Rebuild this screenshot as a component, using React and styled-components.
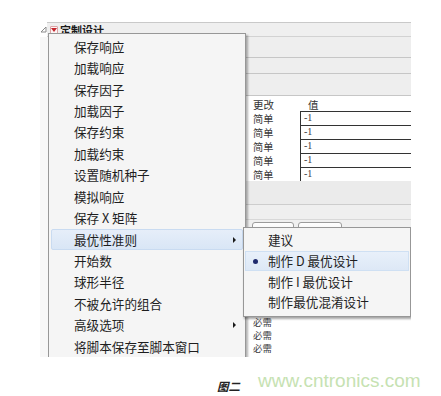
import React from 'react'
import styled, { createGlobalStyle } from 'styled-components'

const mainItems = [
  { label: '保存响应' },
  { label: '加载响应' },
  { label: '保存因子' },
  { label: '加载因子' },
  { label: '保存约束' },
  { label: '加载约束' },
  { label: '设置随机种子' },
  { label: '模拟响应' },
  { label: '保存 X 矩阵' },
  { label: '最优性准则', sub: true, active: true },
  { label: '开始数' },
  { label: '球形半径' },
  { label: '不被允许的组合' },
  { label: '高级选项', sub: true },
  { label: '将脚本保存至脚本窗口' },
]

const subItems = [
  { label: '建议' },
  { label: '制作 D 最优设计', checked: true, active: true },
  { label: '制作 I 最优设计' },
  { label: '制作最优混淆设计' },
]

const tableRows = ['-1', '-1', '-1', '-1', '-1']

// rows under the submenu are covered, only the last three show
const reqRows = ['', '', '', '', '', '必需', '必需', '必需']

export default function App() {
  return (
    <Page>
      <GlobalStyle />
      <Window>
        <TitleBar>
          <Disclosure width="7" height="7" viewBox="0 0 7 7">
            <path d="M6 1 L6 6 L1 6 Z" fill="none" stroke="#8a8a8a" strokeWidth="1" />
          </Disclosure>
          <TitleInner>
            <RedButton>
              <svg width="6" height="4" viewBox="0 0 6 4">
                <path d="M0 0 L6 0 L3 4 Z" fill="#c4262d" />
              </svg>
            </RedButton>
            <TitleText>定制设计</TitleText>
          </TitleInner>
        </TitleBar>

        <Body>
          <LeftPane />
          <RightPane>
            <Band h={21} />
            <Band h={16} />
            <Band h={22} />
            <TableHead>
              <HeadCell>更改</HeadCell>
              <HeadCell value>值</HeadCell>
            </TableHead>
            {tableRows.map((v, i) => (
              <TableRow key={i}>
                <Cell>简单</Cell>
                <ValueCell>{v}</ValueCell>
              </TableRow>
            ))}
            <GrayBlock h={24} />
            <GrayBlock h={15} light />
            <ButtonRow>
              <GhostButton w={42} />
              <GhostButton w={44} />
            </ButtonRow>
            {reqRows.map((t, i) => (
              <ReqRow key={i}>{t}</ReqRow>
            ))}
          </RightPane>
        </Body>

        <MainMenu>
          {mainItems.map((item) => (
            <MenuItem key={item.label} active={item.active}>
              {item.label}
              {item.sub && <SubArrow />}
            </MenuItem>
          ))}
        </MainMenu>

        <SubMenu>
          {subItems.map((item) => (
            <SubItem key={item.label} active={item.active}>
              {item.checked && <Bullet />}
              {item.label}
            </SubItem>
          ))}
        </SubMenu>
      </Window>

      <Footer>
        <Caption>图二</Caption>
        <Watermark>www.cntronics.com</Watermark>
      </Footer>
    </Page>
  )
}

const GlobalStyle = createGlobalStyle`
  html, body {
    margin: 0;
    padding: 0;
    background: #ffffff;
  }
  body {
    font-family: "Noto Sans CJK SC", "Liberation Sans", sans-serif;
    color: #1e1e1e;
  }
`

const Page = styled.div`
  width: 441px;
  height: 396px;
  padding-top: 22px;
  box-sizing: border-box;
  overflow: hidden;
`

const Window = styled.div`
  position: relative;
  margin-left: 40px;
  width: 371px;
  height: 335px;
  overflow: hidden;
  display: flex;
  flex-direction: column;
`

const TitleBar = styled.div`
  display: flex;
  height: 15px;
  flex-shrink: 0;
`

const Disclosure = styled.svg`
  margin-top: 4px;
  flex-shrink: 0;
`

const TitleInner = styled.div`
  flex: 1;
  display: flex;
  align-items: center;
  padding-left: 3px;
  border-top: 1px solid #c9c9c9;
  border-bottom: 1px solid #d2d2d2;
  background: #efefef;
`

const RedButton = styled.span`
  width: 8px;
  height: 8px;
  box-sizing: border-box;
  border: 1px solid #dca4a6;
  background: #fdf5f5;
  border-radius: 1px;
  display: flex;
  align-items: center;
  justify-content: center;
  margin-right: 2px;
`

const TitleText = styled.span`
  font-size: 11px;
  font-weight: 700;
  line-height: 12px;
  color: #1a1a1a;
`

const Body = styled.div`
  flex: 1;
  display: flex;
`

const LeftPane = styled.div`
  width: 206px;
  flex-shrink: 0;
  background: #f7f7f7;
`

const RightPane = styled.div`
  flex: 1;
  display: flex;
  flex-direction: column;
  background: #ffffff;
`

const Band = styled.div`
  height: ${(p) => p.h}px;
  box-sizing: border-box;
  flex-shrink: 0;
  background: #eeeeee;
  border-bottom: 1px solid #c6c6c6;
`

const TableHead = styled.div`
  display: grid;
  grid-template-columns: 54px 1fr;
  height: 15px;
  flex-shrink: 0;
  align-items: end;
`

const HeadCell = styled.span`
  font-size: 10.5px;
  line-height: 13px;
  color: #333;
  padding-left: ${(p) => (p.value ? 8 : 7)}px;
`

const TableRow = styled.div`
  display: grid;
  grid-template-columns: 54px 1fr;
  height: 14px;
  flex-shrink: 0;
`

const Cell = styled.span`
  font-size: 10.2px;
  line-height: 12px;
  padding-left: 7px;
  padding-top: 2px;
  color: #3a3a3a;
  overflow: hidden;
`

const ValueCell = styled.span`
  font-family: "Liberation Serif", "Noto Sans CJK SC", serif;
  font-size: 10px;
  line-height: 12px;
  padding-left: 3px;
  color: #3a3a3a;
  border-left: 1px solid #333;
  border-top: 1px solid #333;
  box-sizing: border-box;
`

const GrayBlock = styled.div`
  height: ${(p) => p.h}px;
  box-sizing: border-box;
  flex-shrink: 0;
  background: ${(p) => (p.light ? '#efefef' : '#ebebeb')};
  border-bottom: 1px solid ${(p) => (p.light ? '#d8d8d8' : '#cdcdcd')};
`

const ButtonRow = styled.div`
  display: flex;
  gap: 4px;
  height: 31px;
  padding: 2px 6px 0;
  box-sizing: border-box;
  flex-shrink: 0;
  background: #f0f0f0;
`

const GhostButton = styled.div`
  width: ${(p) => p.w}px;
  height: 22px;
  box-sizing: border-box;
  border: 1px solid #9c9c9c;
  border-radius: 3px;
  background: linear-gradient(#ffffff, #e8e8e8);
`

const ReqRow = styled.div`
  height: 13px;
  flex-shrink: 0;
  font-size: 9.4px;
  line-height: 13px;
  padding-left: 7px;
  color: #3a3a3a;
`

const MainMenu = styled.div`
  position: absolute;
  left: 8px;
  top: 11px;
  width: 198px;
  height: 340px;
  box-sizing: border-box;
  padding: 2px;
  background: #f5f5f5;
  border: 1px solid #979797;
  box-shadow: 2px 2px 2px rgba(0, 0, 0, 0.3);
`

const MenuItem = styled.div`
  position: relative;
  height: 21.43px;
  box-sizing: border-box;
  display: flex;
  align-items: center;
  padding-left: 22px;
  font-size: 12.6px;
  line-height: 16px;
  color: #1e1e1e;
  border: 1px solid ${(p) => (p.active ? '#c9dbf1' : 'transparent')};
  border-radius: 2px;
  background: ${(p) =>
    p.active ? 'linear-gradient(#e6eef9, #d9e6f6)' : 'transparent'};
`

const SubArrow = styled.span`
  position: absolute;
  right: 6px;
  top: 50%;
  margin-top: -3px;
  width: 0;
  height: 0;
  border-top: 3px solid transparent;
  border-bottom: 3px solid transparent;
  border-left: 3px solid #1a1a1a;
`

const SubMenu = styled.div`
  position: absolute;
  left: 203px;
  top: 205px;
  width: 168px;
  height: 90px;
  box-sizing: border-box;
  padding: 2px 1px;
  background: #f5f5f5;
  border: 1px solid #979797;
  box-shadow: 1px 2px 2px rgba(0, 0, 0, 0.35);
`

const SubItem = styled.div`
  position: relative;
  height: 20.7px;
  box-sizing: border-box;
  display: flex;
  align-items: center;
  padding-left: 22px;
  font-size: 12.6px;
  line-height: 16px;
  color: #1e1e1e;
  border: 1px solid ${(p) => (p.active ? '#cfe0f3' : 'transparent')};
  background: ${(p) =>
    p.active ? 'linear-gradient(#e8f0fa, #dde8f6)' : 'transparent'};
`

const Bullet = styled.span`
  position: absolute;
  left: 7px;
  top: 50%;
  margin-top: -2.5px;
  width: 5px;
  height: 5px;
  border-radius: 50%;
  background: #1f2a6d;
`

const Footer = styled.div`
  display: flex;
  align-items: flex-start;
  gap: 18px;
  padding-left: 217px;
`

const Caption = styled.span`
  margin-top: 24px;
  font-family: "Liberation Serif", "Noto Sans CJK SC", serif;
  font-size: 11.5px;
  line-height: 12px;
  font-weight: 700;
  font-style: italic;
  color: #222;
`

const Watermark = styled.span`
  margin-top: 13px;
  font-family: "Liberation Sans", Arial, sans-serif;
  font-size: 19px;
  line-height: 22px;
  color: #c6e2b2;
`
